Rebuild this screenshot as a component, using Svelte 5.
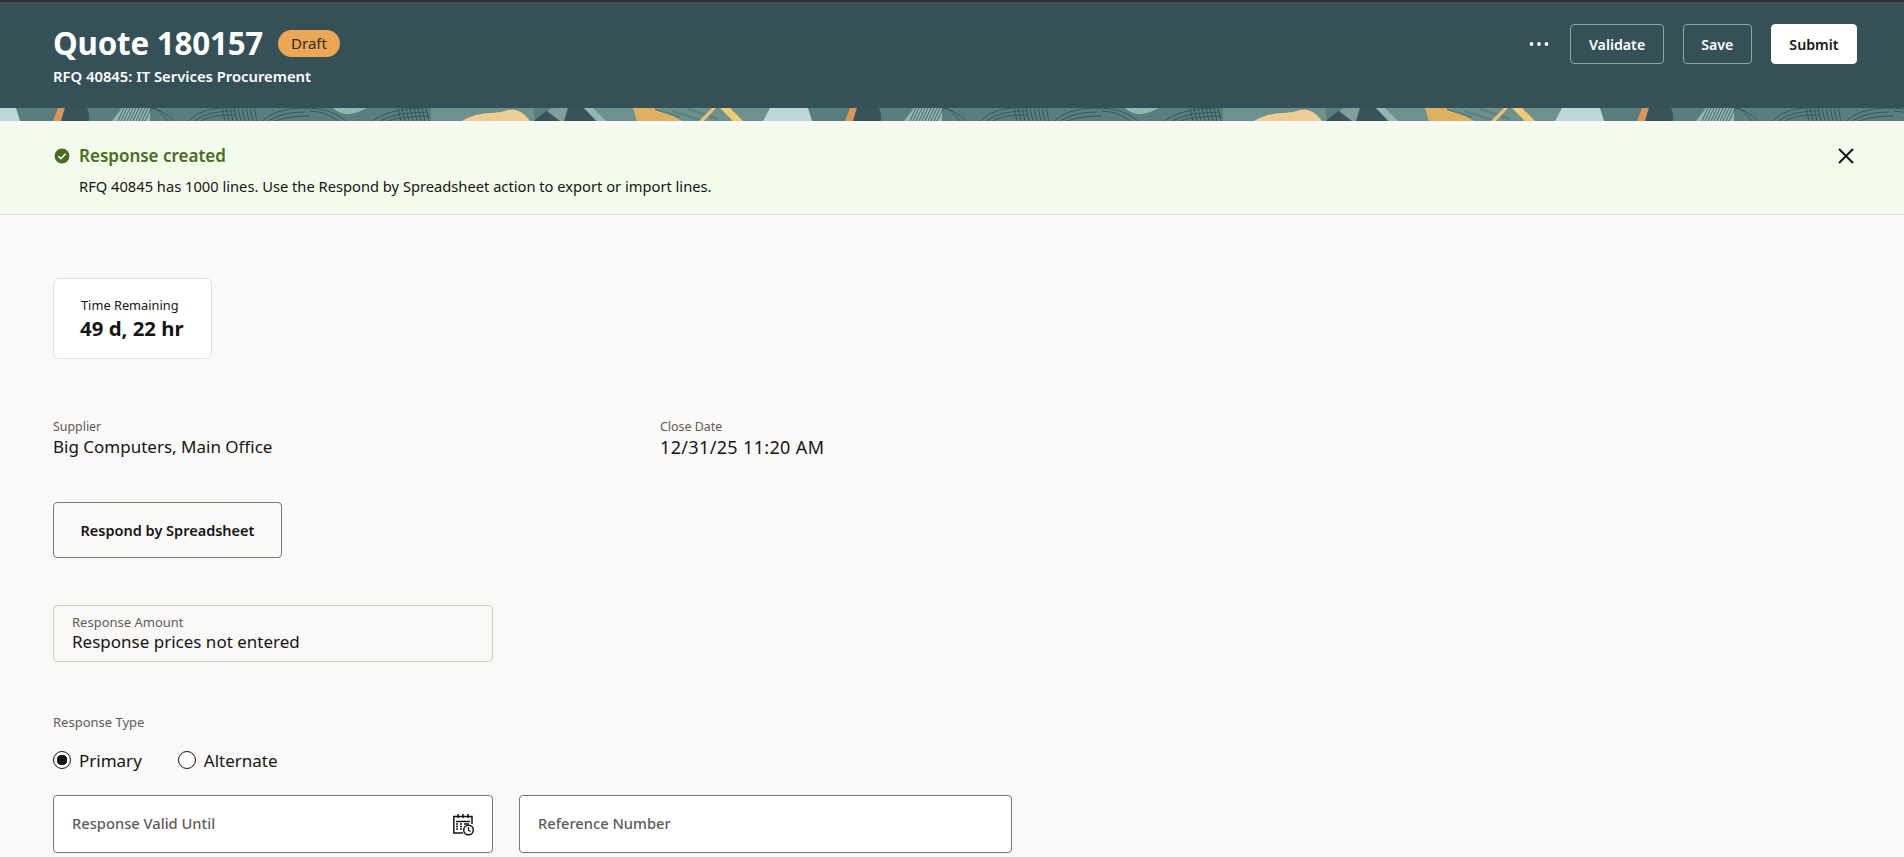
<script>
  const actions = ['Validate', 'Save'];
</script>

<div class="page">
  <div class="topline"></div>
  <header class="hero">
    <div class="hero-main">
      <div>
        <div class="title-row">
          <h1>Quote 180157</h1>
          <span class="badge">Draft</span>
        </div>
        <div class="subtitle">RFQ 40845: IT Services Procurement</div>
      </div>
      <div class="hero-actions">
        <button class="more" aria-label="More">
          <svg width="20" height="6" viewBox="0 0 20 6"><circle cx="2.5" cy="3" r="1.9" /><circle cx="10" cy="3" r="1.9" /><circle cx="17.5" cy="3" r="1.9" /></svg>
        </button>
        {#each actions as a}
          <button class="outline">{a}</button>
        {/each}
        <button class="solid">Submit</button>
      </div>
    </div>
    <svg class="strip" width="100%" height="13" aria-hidden="true">
      <defs>
        <pattern id="tile" x="0" y="0" width="792" height="13" patternUnits="userSpaceOnUse">
          <rect width="792" height="13" fill="#587f7d" />
          <path d="M0 0H16L20 13H0Z" fill="#bdd6d8" />
          <path d="M58 0H65L61 13H53Z" fill="#dd9558" />
          <path d="M65 0H87Q90 6 89 13H61Z" fill="#38535a" />
          <path d="M122 0H150V13H112Z" fill="#93b5b3" />
          <g fill="none" stroke="#2f4a4f" stroke-width="1" opacity=".8">
            <path d="M118 13L124 0M121 13L127 0M124 13L130 0M127 13L133 0M130 13L136 0M133 13L139 0M136 13L142 0M139 13L145 0M142 13L148 0M145 13L151 0" />
            <path d="M150 0Q165 3 174 13M154 0Q160 3 168 13" />
            <path d="M188 13Q205 -3 236 0M194 13Q210 2 236 3M201 13Q214 6 236 7" />
            <path d="M222 0L225 13M226 0L229 13M230 0L233 13M234 0L237 13M238 0L241 13M242 0L245 13M246 0L249 13M250 0L253 13M254 0L257 13" />
            <path d="M262 13Q275 1 300 0M268 13Q282 4 305 4M275 13Q288 8 310 8" />
            <path d="M295 0Q330 -2 346 13M310 3Q328 4 338 13" />
            <path d="M372 13Q390 0 425 0M380 13Q396 4 428 4M388 13Q402 8 430 8" />
            <path d="M398 0L401 13M402 0L405 13M406 0L409 13M410 0L413 13M414 0L417 13M418 0L421 13M422 0L425 13M426 0L429 13" />
          </g>
          <path d="M333 0Q345 12 367 0Z" fill="#93b5b3" />
          <path d="M431 0H534V13H431Z" fill="#6f918e" />
          <path d="M462 13Q475 5 492 5Q500 5 508 2Q520 -1 530 13Z" fill="#edcf95" />
          <path d="M534 13Q544 4 551 0H584L596 13Z" fill="#38535a" />
          <path d="M551 0H568L564 13H560L547 3Z" fill="#7f9f9c" />
          <path d="M584 0H770L763 13H596Z" fill="#6f918e" />
          <path d="M584 0H593L606 13H597Z" fill="#93b5b3" />
          <path d="M633 0H658L682 13H637Z" fill="#e0b162" />
          <path d="M672 3L704 13M688 1L718 11M655 1L680 9" stroke="#587f7d" stroke-width="2" fill="none" />
          <path d="M712 0H716L704 13H699Z" fill="#e8c573" />
          <path d="M720 0H730L743 13H733Z" fill="#efcd74" />
          <path d="M770 0H792V13H763Z" fill="#bdd6d8" />
        </pattern>
      </defs>
      <rect width="100%" height="13" fill="url(#tile)" />
    </svg>
  </header>

  <div class="gap"></div>
  <section class="message">
    <div class="message-head">
      <svg width="16" height="16" viewBox="0 0 16 16"><circle cx="8" cy="8" r="7.5" fill="#4a6b20" /><path d="M4.4 8.2l2.5 2.5 4.7-5" fill="none" stroke="#fff" stroke-width="1.6" /></svg>
      <strong>Response created</strong>
      <button class="close" aria-label="Close">
        <svg width="16" height="16" viewBox="0 0 16 16"><path d="M1 1l14 14M15 1L1 15" stroke="#161513" stroke-width="2" /></svg>
      </button>
    </div>
    <p>RFQ 40845 has 1000 lines. Use the Respond by Spreadsheet action to export or import lines.</p>
  </section>

  <main class="content">
    <div class="metric">
      <span>Time Remaining</span>
      <b>49 d, 22 hr</b>
    </div>

    <div class="facts">
      <div class="fact">
        <label for="sup">Supplier</label>
        <div id="sup">Big Computers, Main Office</div>
      </div>
      <div class="fact">
        <label for="close">Close Date</label>
        <div id="close" class="date">12/31/25 11:20 AM</div>
      </div>
    </div>

    <button class="sheet">Respond by Spreadsheet</button>

    <div class="readonly">
      <span>Response Amount</span>
      <div>Response prices not entered</div>
    </div>

    <div class="type-label">Response Type</div>
    <div class="radios">
      <div class="radio"><i class="dot on"></i>Primary</div>
      <div class="radio"><i class="dot"></i>Alternate</div>
    </div>

    <div class="inputs">
      <div class="input short">
        <span>Response Valid Until</span>
        <svg width="24" height="24" viewBox="0 0 24 24" fill="none" stroke="#161513" stroke-width="1.5">
          <path d="M12 21H2.8V4.5H21V12" />
          <path d="M7 2v4M12 2v4M17 2v4" />
          <path d="M5 9.5h14M5 12h2M9 12h2M13 12h5M5 14.5h2M9 14.5h2M5 17h2M9 17h2" stroke-width="1.4" />
          <circle cx="17.5" cy="18" r="4.8" fill="#fff" />
          <path d="M17.5 15v3.2l2 1.3" stroke-width="1.3" />
        </svg>
      </div>
      <div class="input wide"><span>Reference Number</span></div>
    </div>
  </main>
</div>

<style>
  :global(body) {
    margin: 0;
    background: #faf9f7;
  }

  .page {
    height: 857px;
    overflow: hidden;
    font-family: "Noto Sans", "Open Sans", sans-serif;
    color: #161513;
  }

  button {
    font-family: inherit;
    cursor: pointer;
  }

  .topline {
    height: 2px;
    background: #312d2a;
  }

  .hero {
    background: #355057;
    color: #fff;
  }

  .hero-main {
    height: 106px;
    padding: 20px 47px 0 53px;
    box-sizing: border-box;
    display: flex;
    justify-content: space-between;
    align-items: flex-start;
  }

  .hero-actions {
    margin-top: 2px;
    display: flex;
    align-items: center;
    gap: 19px;
  }

  .title-row {
    display: flex;
    align-items: center;
    gap: 15px;
    height: 42px;
  }

  h1 {
    margin: 0;
    font-size: 31.3px;
    line-height: 42px;
    font-weight: 700;
    letter-spacing: -0.2px;
  }

  .badge {
    background: #eaa754;
    color: #312d2a;
    font-size: 15px;
    line-height: 27px;
    padding: 0 13px;
    border-radius: 14px;
  }

  .subtitle {
    margin-top: 2px;
    font-size: 14.8px;
    line-height: 20px;
    font-weight: 600;
  }

  .more {
    background: none;
    border: 0;
    padding: 0;
    margin-right: 2px;
    display: flex;
  }

  .more svg {
    fill: #fff;
  }

  .outline,
  .solid {
    height: 40px;
    padding: 0 17.5px;
    border-radius: 4px;
    font-size: 14.2px;
    font-weight: 600;
  }

  .outline {
    background: transparent;
    color: #fff;
    border: 1px solid #8fa5a8;
  }

  .solid {
    background: #fff;
    color: #161513;
    border: 1px solid #fff;
  }

  .strip {
    display: block;
  }

  .gap {
    height: 4px;
  }

  .message {
    background: #f3fcec;
    border-bottom: 1px solid #dddcd3;
    height: 90px;
    padding: 0 47px 0 54px;
    box-sizing: border-box;
    position: relative;
  }

  .message-head {
    display: flex;
    align-items: center;
    gap: 9px;
    padding-top: 20px;
    height: 22px;
  }

  .message-head strong {
    color: #4a6b20;
    font-size: 17px;
    font-weight: 600;
    line-height: 22px;
  }

  .close {
    margin-left: auto;
    background: none;
    border: 0;
    padding: 0;
    display: flex;
    margin-right: 3px;
  }

  .message p {
    margin: 10px 0 0 25px;
    font-size: 14.7px;
    line-height: 19px;
  }

  .content {
    padding: 63px 53px 0;
  }

  .metric {
    width: 159px;
    height: 81px;
    box-sizing: border-box;
    background: #fff;
    border: 1px solid #e4e1dc;
    border-radius: 6px;
    padding: 17px 0 0 26px;
    display: flex;
    flex-direction: column;
  }

  .metric span {
    font-size: 12.8px;
    line-height: 18px;
    padding-left: 1px;
  }

  .metric b {
    font-size: 20.4px;
    line-height: 28px;
    font-weight: 700;
  }

  .facts {
    display: flex;
    margin-top: 60px;
  }

  .fact {
    width: 607px;
  }

  .fact label {
    display: block;
    font-size: 12.4px;
    line-height: 16px;
    color: #5f5c58;
  }

  .fact div {
    font-size: 17px;
    line-height: 24px;
  }

  .fact .date {
    font-size: 18px;
    letter-spacing: 0.35px;
  }

  .sheet {
    display: block;
    margin-top: 43px;
    width: 229px;
    height: 56px;
    background: transparent;
    border: 1px solid #7b7874;
    border-radius: 4px;
    font-size: 14.5px;
    font-weight: 600;
    color: #161513;
    padding: 0;
  }

  .readonly {
    margin-top: 47px;
    width: 440px;
    height: 57px;
    box-sizing: border-box;
    border: 1px solid #cfccc6;
    border-radius: 4px;
    padding: 8px 18px 0;
  }

  .readonly span {
    display: block;
    font-size: 13px;
    line-height: 17px;
    color: #5f5c58;
  }

  .readonly div {
    font-size: 17px;
    line-height: 22px;
  }

  .type-label {
    margin-top: 51px;
    font-size: 13px;
    line-height: 18px;
    color: #5f5c58;
  }

  .radios {
    display: flex;
    gap: 36px;
    margin-top: 16px;
    height: 26px;
    align-items: center;
  }

  .radio {
    display: flex;
    align-items: center;
    gap: 8px;
    font-size: 17px;
  }

  .dot {
    width: 18px;
    height: 18px;
    box-sizing: border-box;
    border: 1.5px solid #161513;
    border-radius: 50%;
    display: block;
    background: #fff;
  }

  .dot.on {
    background: radial-gradient(circle, #161513 0 5px, #fff 5.5px);
  }

  .inputs {
    display: flex;
    gap: 26px;
    margin-top: 22px;
  }

  .input {
    height: 58px;
    box-sizing: border-box;
    background: #fff;
    border: 1px solid #7b7874;
    border-radius: 4px;
    padding: 0 18px 2px;
    display: flex;
    align-items: center;
    justify-content: space-between;
    font-size: 14.7px;
    font-weight: 500;
    color: #5f5c58;
  }

  .short {
    width: 440px;
  }

  .short svg {
    margin-right: -1px;
    margin-top: 2px;
  }

  .wide {
    width: 493px;
  }
</style>
